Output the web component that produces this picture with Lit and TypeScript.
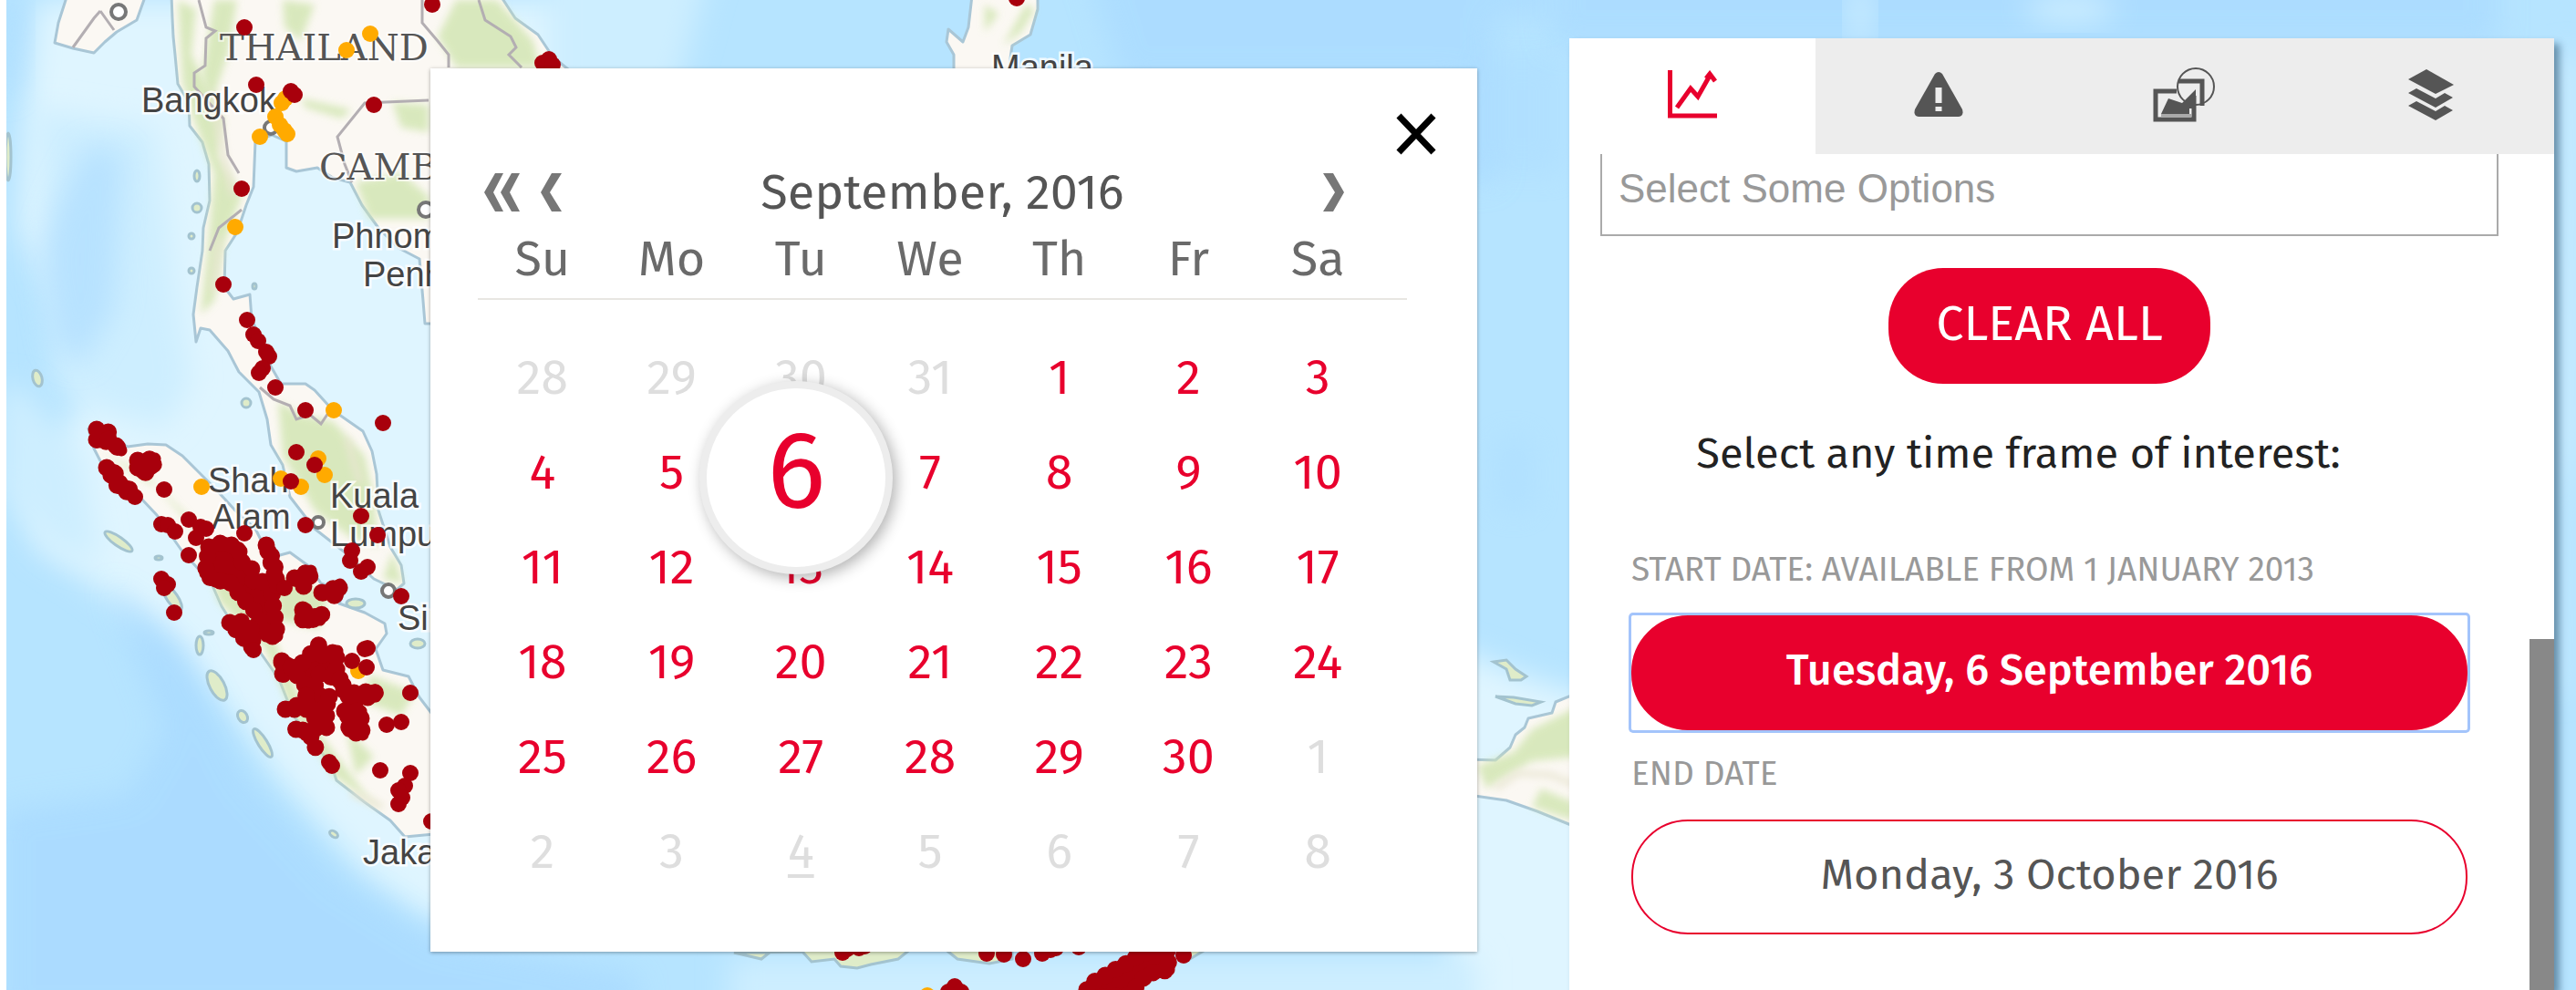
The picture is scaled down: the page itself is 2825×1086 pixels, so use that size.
import { LitElement, html, svg, css } from "lit";
import { customElement, property, state } from "lit/decorators.js";
import { classMap } from "lit/directives/class-map.js";

type Point = [number, number];

const points = (list: Point[]) => list.map((p) => p.join(",")).join(" ");

const FIRES: Point[] = [
  [268, 30], [281, 93], [319, 100], [323, 104], [410, 115], [265, 207], [245, 312], [271, 351],
  [278, 367], [283, 374], [292, 386], [295, 391], [288, 404], [284, 409], [302, 425], [335, 450],
  [420, 464], [325, 496], [345, 510], [319, 528], [474, 5], [180, 537], [148, 545], [177, 575],
  [184, 576], [192, 583], [207, 570], [220, 578], [215, 590], [226, 580], [207, 609], [268, 585],
  [177, 635], [184, 641], [180, 645], [191, 672], [335, 576], [396, 566], [414, 587], [386, 604],
  [384, 615], [396, 627], [403, 622], [440, 654], [473, 901], [361, 836], [364, 840], [417, 845],
  [450, 848], [444, 862], [437, 867], [441, 875], [437, 882], [450, 760], [424, 795], [440, 792],
  [403, 711], [400, 712], [386, 725], [402, 732], [278, 713], [312, 645], [595, 69], [602, 65],
  [606, 71], [1115, -2], [924, 1045], [929, 1041], [942, 1040], [948, 1038], [1082, 1046],
  [1101, 1047], [1122, 1052], [1143, 1046], [1152, 1042], [1158, 1040], [1183, 1039], [1298, 1048],
  [1040, 1088], [1047, 1082], [1054, 1088],
];

const ALERTS: Point[] = [
  [406, 37], [380, 55], [313, 108], [309, 113], [302, 128], [307, 137], [312, 143], [315, 147],
  [285, 150], [258, 249], [366, 450], [349, 503], [356, 521], [308, 525], [330, 534], [221, 534],
  [393, 736], [1017, 1092],
];

const CLUSTERS: Point[][] = [
  [[106, 471], [119, 474], [119, 484], [106, 485]],
  [[119, 482], [128, 490], [133, 494]],
  [[117, 513], [126, 516], [127, 528], [140, 534], [145, 542], [130, 535]],
  [[151, 505], [170, 503], [167, 514], [157, 520], [151, 515]],
  [[229, 600], [245, 595], [262, 601], [262, 614], [276, 624], [278, 640], [298, 636], [299, 660],
   [302, 680], [304, 698], [292, 698], [281, 672], [265, 655], [250, 636], [236, 638], [225, 629]],
  [[252, 683], [263, 681], [276, 690], [278, 712]],
  [[292, 598], [296, 606], [301, 618], [303, 635], [305, 645]],
  [[323, 634], [341, 626], [341, 630], [333, 643]],
  [[353, 650], [363, 647], [373, 641], [370, 654]],
  [[332, 669], [329, 678], [338, 683], [353, 673], [351, 680]],
  [[309, 725], [316, 727], [312, 742], [309, 738]],
  [[332, 727], [350, 707], [354, 720], [370, 714], [368, 730], [373, 748], [362, 742], [350, 740],
   [345, 754], [352, 765], [342, 762], [332, 748], [318, 732]],
  [[373, 745], [378, 760], [396, 760], [411, 757], [412, 764], [396, 766], [385, 770]],
  [[313, 778], [320, 775], [336, 772], [335, 760], [338, 775], [352, 785], [362, 762], [358, 775],
   [358, 798], [344, 800], [342, 806], [322, 799], [338, 802], [346, 820], [340, 806], [350, 792],
   [336, 778]],
  [[378, 780], [396, 780], [396, 797], [398, 806], [382, 802], [384, 790]],
  [[1184, 1096], [1198, 1078], [1235, 1057], [1252, 1046], [1280, 1040], [1282, 1064], [1258, 1068],
   [1238, 1092]],
];

const MAINLAND: Point[] = [
  [188, -6], [189, 20], [190, 40], [192, 60], [195, 92], [207, 112], [208, 138], [222, 156],
  [229, 180], [230, 220], [223, 250], [222, 275], [216, 315], [212, 345], [215, 375], [220, 360],
  [230, 362], [250, 385], [262, 408], [284, 430], [293, 460], [297, 488], [310, 510], [318, 545],
  [345, 580], [377, 605], [410, 635], [435, 647], [443, 640], [440, 620], [428, 600], [415, 560],
  [413, 520], [408, 495], [398, 473], [365, 450], [345, 428], [335, 421], [308, 421], [296, 400],
  [285, 370], [276, 350], [274, 323], [256, 328], [246, 315], [247, 275], [260, 255], [270, 225],
  [278, 205], [280, 155], [298, 148], [314, 155], [314, 184], [325, 188], [348, 184], [365, 195],
  [384, 200], [397, 225], [415, 250], [437, 272], [460, 284], [464, 330], [466, 355], [640, 355],
  [640, 90], [606, 62], [590, 38], [565, 20], [548, -6],
];

const SUMATRA: Point[] = [
  [97, 470], [108, 478], [140, 490], [162, 487], [182, 488], [200, 500], [215, 515], [235, 535],
  [258, 560], [280, 580], [296, 612], [318, 606], [340, 622], [352, 640], [378, 648], [372, 662],
  [400, 672], [422, 684], [424, 695], [412, 712], [420, 735], [448, 742], [460, 765], [476, 786],
  [476, 915], [444, 918], [428, 900], [400, 880], [369, 856], [364, 840], [345, 815], [322, 785],
  [306, 745], [285, 715], [262, 695], [243, 665], [232, 640], [200, 605], [172, 565], [155, 547],
  [120, 525], [103, 492],
];

const DELTA: Point[] = [
  [74, -6], [64, 25], [60, 47], [80, 53], [103, 58], [115, 46], [128, 35], [150, 22], [160, -6],
];

const PAPUA: Point[] = [
  [1610, 833], [1640, 834], [1656, 820], [1662, 806], [1672, 798], [1676, 788], [1702, 782],
  [1706, 770], [1740, 756], [1740, 912], [1686, 890], [1652, 878], [1610, 872],
];

const LABELS: { x: number; y: number; text: string }[] = [
  { x: 155, y: 123, text: "Bangkok" },
  { x: 364, y: 272, text: "Phnom" },
  { x: 398, y: 314, text: "Penh" },
  { x: 228, y: 540, text: "Shah" },
  { x: 232, y: 580, text: "Alam" },
  { x: 362, y: 557, text: "Kuala" },
  { x: 362, y: 599, text: "Lumpur" },
  { x: 436, y: 691, text: "Singapore" },
  { x: 398, y: 948, text: "Jakarta" },
  { x: 1087, y: 87, text: "Manila" },
];

@customElement("fire-map")
class FireMap extends LitElement {
  static styles = css`
    :host {
      display: block;
      overflow: hidden;
      background: #b6e4ff;
    }
    .canvas {
      display: block;
      width: 100%;
      height: 100%;
    }
    .land { fill: #fbf8f3; stroke: #a9c6d6; stroke-width: 3; stroke-linejoin: round; }
    .isle { fill: #dfecc9; stroke: #a3c3cf; stroke-width: 3; }
    .forest { fill: #d3e6b4; filter: url(#haze); opacity: 0.85; }
    .ridge { fill: none; stroke: #e9e6d3; stroke-width: 6; filter: url(#haze); }
    .shelf { fill: #dff5ff; filter: url(#fog); }
    .deep { fill: #a9daff; filter: url(#fog); }
    .pale { fill: #cdeeff; filter: url(#fog); }
    .border { fill: none; stroke: #b3aeb2; stroke-width: 3; }
    .fires { fill: #a8000c; }
    .cluster { fill: #a8000c; stroke: #a8000c; stroke-width: 13; stroke-linejoin: round; }
    .bumps { fill: none; stroke: #a8000c; stroke-width: 19; stroke-linecap: round; stroke-dasharray: 0 13; }
    .alerts { fill: #ffaa00; }
    .town { fill: #fff; stroke: #777; stroke-width: 4; }
    .city {
      font: 38px "Liberation Sans", Arial, sans-serif;
      fill: #444;
      stroke: #fff;
      stroke-width: 5;
      stroke-opacity: 0.8;
      paint-order: stroke;
    }
    .country {
      font: 40px "DejaVu Serif", serif;
      fill: #555;
      stroke: #fff;
      stroke-width: 4;
      stroke-opacity: 0.6;
      paint-order: stroke;
    }
  `;

  render() {
    return html`
      <svg class="canvas" viewBox="7 0 2818 1086" preserveAspectRatio="xMinYMin slice" role="img" aria-label="Map of fires in South East Asia">
        <defs>
          <filter id="fog" x="-30%" y="-30%" width="160%" height="160%"><feGaussianBlur stdDeviation="16" /></filter>
          <filter id="haze" x="-30%" y="-30%" width="160%" height="160%"><feGaussianBlur stdDeviation="4" /></filter>
        </defs>
        <path class="shelf" d="M40 0H640V1000L470 1010L400 960L310 860L250 780L180 700L100 640L40 600L20 540L90 440L60 330L20 250L30 100Z" />
        <path class="pale" d="M40 120L170 140L190 300L210 420L180 470L110 450L60 420L50 250Z" />
        <path class="deep" d="M95 160L135 165L125 340L90 400L60 380L45 280L60 230Z" opacity="0.6" />
        <path class="deep" d="M0 0H30L20 90L0 110Z" opacity="0.6" />
        <path class="deep" d="M120 640L200 710L270 850L370 960L480 1030L700 1070V1120H0V890L140 870L180 800Z" opacity="0.8" />
        <path class="pale" d="M30 430L90 500L110 620L60 600L0 540V420Z" />
        <path class="deep" d="M1190 -40H1700V20H1640V200H1600V90H1230Z" opacity="0.7" />
        <path class="pale" d="M600 -40H780L740 110H600Z" />
        <path class="deep" d="M1700 -60H2740V50H1700Z" opacity="0.7" />
        <ellipse class="pale" cx="2040" cy="15" rx="12" ry="40" />
        <ellipse class="pale" cx="2270" cy="10" rx="50" ry="16" />
        <path class="deep" d="M1625 60H1715V190H1625ZM1640 480H1680V560H1640Z" opacity="0.4" />
        <path class="pale" d="M2805 60H2825V480L2810 560V760H2800Z" />
        <path class="shelf" d="M1590 710L1680 745L1760 770V1140H1590V900Z" />
        <path class="pale" d="M800 1050H1620V1140H800Z" />

        <polygon class="land" points=${points(DELTA)} />
        <polygon class="land" points=${points(MAINLAND)} />
        <polygon class="land" points=${points(SUMATRA)} />
        <polygon class="land" points=${points(PAPUA)} />
        <path class="land" d="M1066 -5L1062 30L1056 46L1040 32L1038 46L1046 60V85H1105L1110 50L1130 38L1138 10V-5Z" />
        <path class="isle" d="M805 1045L835 1052L850 1040H1000L985 1052L955 1058L940 1062L922 1060L915 1052L890 1055L880 1044ZM1035 1040L1050 1052L1085 1057L1110 1052V1040ZM1300 1055L1325 1040H1295Z" />

        <path class="forest" d="M195 0L215 10L210 60L225 90L245 130L240 170L265 215L245 270L235 330L220 345L228 270L235 190L212 130L200 90Z" />
        <path class="forest" d="M235 0H260L250 60L230 120L222 80ZM310 0L345 5L330 45L312 30ZM430 112L470 115V145L440 140ZM330 108L385 120L375 130L335 118Z" />
        <path class="forest" d="M390 200L440 190L470 215V240H405ZM500 0H545L585 45L592 74H500L480 40Z" />
        <path class="forest" d="M305 440L330 455L365 462L400 500L410 545L415 600L385 590L345 560L310 500Z" />
        <path class="forest" d="M110 495L180 540L215 575L240 660L290 710L320 780L365 850L420 890L400 870L340 790L300 700L230 600L160 520Z" />
        <path class="forest" d="M300 630L360 650L350 690L305 680ZM405 740L455 760L440 785L400 770ZM430 605L442 640L420 635ZM380 800L410 830L390 850Z" />
        <path class="forest" d="M1620 840L1660 825L1680 800L1730 775V830L1680 835L1630 865Z" />
        <path class="forest" d="M1690 865L1725 880V900L1680 885ZM1125 5L1135 10L1120 35L1100 50ZM1080 5L1095 15L1080 35Z" />
        <path class="ridge" d="M232 100L245 170L256 215M240 260L234 320M1640 865L1665 848L1700 850L1730 862M380 480L395 530M385 870L420 885" />

        <g>
          <path class="border" d="M218 0L226 30L236 34L226 42L225 72L213 80V95L245 130L250 170L262 190M470 110L400 113L370 150L378 180L386 200" />
          <path class="border" d="M463 0V25L480 45L492 60V74M525 0L532 22L560 40L566 52L558 60L572 74M110 12L103 20L80 52M110 12L125 33M285 425L300 438L318 445L325 460L340 455L352 465L362 450M265 230L240 250L230 275" />
        </g>
        <g>
          <ellipse class="isle" cx="130" cy="594" rx="18" ry="5" transform="rotate(35 130 594)" />
          <ellipse class="isle" cx="238" cy="752" rx="8" ry="18" transform="rotate(-28 238 752)" />
          <ellipse class="isle" cx="266" cy="786" rx="5" ry="7" transform="rotate(-30 266 786)" />
          <ellipse class="isle" cx="288" cy="815" rx="5" ry="18" transform="rotate(-32 288 815)" />
          <ellipse class="isle" cx="189" cy="656" rx="6" ry="16" transform="rotate(-35 189 656)" />
          <ellipse class="isle" cx="219" cy="708" rx="4" ry="10" />
          <ellipse class="isle" cx="229" cy="694" rx="5" ry="2" />
          <ellipse class="isle" cx="174" cy="612" rx="4" ry="2" />
          <ellipse class="isle" cx="41" cy="415" rx="5" ry="9" transform="rotate(-15 41 415)" />
          <ellipse class="isle" cx="366" cy="915" rx="5" ry="3" transform="rotate(35 366 915)" />
          <ellipse class="isle" cx="216" cy="193" rx="3" ry="6" />
          <ellipse class="isle" cx="216" cy="228" rx="5" ry="5" />
          <ellipse class="isle" cx="210" cy="259" rx="3" ry="3" />
          <ellipse class="isle" cx="210" cy="297" rx="3" ry="3" />
          <ellipse class="isle" cx="270" cy="442" rx="5" ry="5" />
          <ellipse class="isle" cx="279" cy="314" rx="2" ry="3" />
          <ellipse class="isle" cx="390" cy="662" rx="10" ry="5" />
          <ellipse class="isle" cx="458" cy="706" rx="8" ry="5" />
          <ellipse class="isle" cx="9" cy="172" rx="3" ry="26" />
          <path class="isle" d="M1638 726L1652 724L1662 734L1674 742L1668 746H1656L1652 734Z" />
          <path class="isle" d="M1640 764L1660 765L1690 770L1680 774L1662 772Z" />
        </g>
        <circle class="town" cx="130" cy="13" r="8" />
        <circle class="town" cx="297" cy="140" r="7" />
        <circle class="town" cx="426" cy="648" r="7" />
        <circle class="town" cx="349" cy="573" r="6" />
        <circle class="town" cx="467" cy="230" r="8" />

        <text class="country" x="241" y="66">THAILAND</text>
        <text class="country" x="350" y="197">CAMBODIA</text>
        ${LABELS.map((l) => svg`<text class="city" x=${l.x} y=${l.y}>${l.text}</text>`)}

        <g class="alerts">${ALERTS.map(([x, y]) => svg`<circle cx=${x} cy=${y} r="9" />`)}</g>
        ${CLUSTERS.map(
          (c) => svg`<polygon class="cluster" points=${points(c)} /><polygon class="bumps" points=${points(c)} />`
        )}
        <g class="fires">${FIRES.map(([x, y]) => svg`<circle cx=${x} cy=${y} r="9" />`)}</g>
      </svg>
    `;
  }
}

interface Day {
  day: number;
  inMonth: boolean;
}

const WEEKDAYS = ["Su", "Mo", "Tu", "We", "Th", "Fr", "Sa"];

@customElement("date-picker")
class DatePicker extends LitElement {
  @property({ type: Number }) selected = 6;

  static styles = css`
    :host {
      display: block;
      position: relative;
      box-sizing: border-box;
      padding: 101px 77px 58px 52px;
      background: #fff;
      box-shadow: 0 1px 4px rgba(0, 0, 0, 0.35);
      color: #6a6a6a;
      font: 54px/70px "Fira Sans", "Noto Sans", sans-serif;
    }
    button {
      margin: 0;
      padding: 0;
      border: 0;
      background: none;
      color: inherit;
      font: inherit;
      cursor: pointer;
    }
    svg { display: block; }
    .close {
      position: absolute;
      top: 49px;
      right: 45px;
    }
    .nav {
      display: grid;
      grid-template-columns: 1fr auto 1fr;
      align-items: center;
      color: #777;
    }
    .back {
      display: flex;
      gap: 22px;
      padding-left: 7px;
    }
    .forward {
      justify-self: end;
      margin-right: 69px;
    }
    .title {
      margin: 0;
      color: #555;
      font: inherit;
    }
    .days {
      width: calc(100% - 27px);
      border-spacing: 0;
      table-layout: fixed;
      text-align: center;
    }
    .week {
      position: relative;
    }
    .week::after {
      content: "";
      position: absolute;
      left: 0;
      right: -27px;
      bottom: 0;
      height: 2px;
      background: #e8e6e2;
    }
    th {
      height: 83px;
      padding: 0 0 8px;
      box-sizing: border-box;
      font-weight: 400;
    }
    .body::before {
      content: "";
      display: block;
      height: 33px;
    }
    td {
      position: relative;
      height: 104px;
      padding: 0;
      color: #e8002d;
    }
    .outside { color: #dedede; }
    .today { text-decoration: underline; text-underline-offset: 7px; text-decoration-thickness: 4px; }
    .chosen {
      position: absolute;
      z-index: 1;
      top: -48px;
      left: 50%;
      box-sizing: border-box;
      width: 212px;
      height: 212px;
      margin-left: -111px;
      padding-bottom: 14px;
      border: 8px solid #ededed;
      border-radius: 50%;
      background: #fff;
      box-shadow: 4px 4px 16px rgba(0, 0, 0, 0.3);
      font-size: 120px;
      line-height: 180px;
    }
  `;

  private get weeks(): Day[][] {
    const days: Day[] = [];
    for (let i = 28; i <= 31; i++) days.push({ day: i, inMonth: false });
    for (let i = 1; i <= 30; i++) days.push({ day: i, inMonth: true });
    for (let i = 1; i <= 8; i++) days.push({ day: i, inMonth: false });
    return Array.from({ length: 6 }, (_, w) => days.slice(w * 7, w * 7 + 7));
  }

  private cell(d: Day, week: number) {
    const classes = {
      chosen: d.inMonth && d.day === this.selected,
      outside: !d.inMonth,
      today: week === 5 && d.day === 4,
    };
    return html`<td>
      <button class=${classMap(classes)} @click=${() => d.inMonth && (this.selected = d.day)}>${d.day}</button>
    </td>`;
  }

  render() {
    return html`
      <button class="close" aria-label="Close">
        <svg width="44" height="46" viewBox="0 0 44 46" fill="none" stroke="#000" stroke-width="7">
          <path d="M3 3L41 43M41 3L3 43" />
        </svg>
      </button>
      <div class="nav">
        <div class="back">
          <button aria-label="Previous year">
            <svg width="40" height="42" viewBox="0 0 40 42" fill="currentColor">
              <path d="M12 0H21L10 21L21 42H12L0 21ZM30 0H39L28 21L39 42H30L18 21Z" />
            </svg>
          </button>
          <button aria-label="Previous month">
            <svg width="24" height="42" viewBox="0 0 24 42" fill="currentColor">
              <path d="M12 0H23L10 21L23 42H12L0 21Z" />
            </svg>
          </button>
        </div>
        <h2 class="title">September, 2016</h2>
        <button class="forward" aria-label="Next month">
          <svg width="24" height="42" viewBox="0 0 24 42" fill="currentColor">
            <path d="M12 0H1L14 21L1 42H12L24 21Z" />
          </svg>
        </button>
      </div>
      <table class="days">
        <thead class="week">
          <tr>${WEEKDAYS.map((d) => html`<th scope="col">${d}</th>`)}</tr>
        </thead>
        <tbody class="body">
          ${this.weeks.map((w, i) => html`<tr>${w.map((d) => this.cell(d, i))}</tr>`)}
        </tbody>
      </table>
    `;
  }
}

@customElement("analysis-panel")
class AnalysisPanel extends LitElement {
  @state() private active = 0;

  static styles = css`
    :host {
      display: flex;
      flex-direction: column;
      background: #fff;
      box-shadow: 6px 6px 8px rgba(0, 40, 70, 0.45);
      font: 47px/60px "Fira Sans", "Noto Sans", sans-serif;
      color: #222;
    }
    button {
      box-sizing: border-box;
      margin: 0;
      padding: 0;
      border: 0;
      font: inherit;
      cursor: pointer;
    }
    .tabs {
      display: grid;
      grid-template-columns: repeat(4, 1fr);
    }
    .tab {
      display: flex;
      align-items: center;
      justify-content: center;
      height: 127px;
      padding-bottom: 4px;
      background: #ededed;
      color: #555;
    }
    .tab.active {
      background: #fff;
      color: #e8002d;
    }
    .pane {
      flex: 1;
      display: grid;
      grid-template-columns: 1fr 27px;
    }
    .content {
      display: flex;
      flex-direction: column;
      padding: 0 34px;
    }
    .options {
      box-sizing: border-box;
      width: 100%;
      height: 90px;
      padding: 0 18px 12px;
      border: 2px solid #aaa;
      border-top: 0;
      background: #fff;
      font: 44px/50px "Liberation Sans", Arial, sans-serif;
    }
    .options::placeholder { color: #999; opacity: 1; }
    .clear {
      align-self: center;
      height: 127px;
      margin-top: 35px;
      padding: 0 52px 6px;
      border-radius: 60px;
      background: #e8002d;
      color: #fff;
      font-size: 54px;
    }
    .prompt {
      margin: 46px 68px 0 0;
      text-align: center;
    }
    .field {
      display: flex;
      flex-direction: column;
      padding: 0 34px;
    }
    .start { margin-top: 74px; }
    .end { margin-top: 24px; }
    .label {
      margin-bottom: 26px;
      color: #999;
      font-size: 37px;
      line-height: 48px;
      text-transform: uppercase;
    }
    .date {
      height: 126px;
      padding-bottom: 6px;
      border: 2px solid #e8002d;
      border-radius: 62px;
      background: #fff;
      color: #555;
    }
    .picked {
      background: #e8002d;
      color: #fff;
      font-weight: 500;
    }
    .ring {
      display: grid;
      box-shadow: 0 0 0 3px #a3c4fb;
      border-radius: 2px;
    }
    .track { display: flex; }
    .thumb {
      flex: 1;
      margin-top: 532px;
      background: #888;
    }
  `;

  private icons = [
    {
      name: "Analysis",
      art: svg`<svg width="54" height="54" viewBox="0 0 54 54" fill="none" stroke="currentColor" stroke-width="5">
        <path d="M2.500 0V50H54" />
        <path d="M10 41L25 20L33 29L46 6" /><path d="M42 9L46 4L52 12" />
      </svg>`,
    },
    {
      name: "Fires",
      art: svg`<svg width="54" height="50" viewBox="0 0 54 50">
        <path fill="currentColor" d="M23 2Q27 -2 31 2L53 41Q55 48 49 49H5Q-1 48 1 41Z" />
        <path fill="#ededed" d="M23.500 17H30.500V34H23.500ZM23.500 38H30.500V43H23.500Z" />
      </svg>`,
    },
    {
      name: "Imagery",
      art: svg`<svg width="70" height="62" viewBox="0 0 70 62">
        <path fill="none" stroke="currentColor" stroke-width="5" d="M28 16H54V43M26 27H3V58H45V32" />
        <circle fill="none" stroke="currentColor" stroke-width="2" cx="47" cy="22" r="20" />
        <path fill="currentColor" d="M9 52L17 35L32 40L47 25V46H40V52Z" />
        <path fill="#aaa" d="M9 52H42V56H9Z" />
      </svg>`,
    },
    {
      name: "Layers",
      art: svg`<svg width="50" height="56" viewBox="0 0 50 56" fill="currentColor">
        <path d="M20 0L50 17L30 27L0 11Z" />
        <path d="M9 21L30 32L40 26L49 31L30 42L0 26Z" />
        <path d="M9 35L30 46L40 40L49 45L30 56L0 40Z" />
      </svg>`,
    },
  ];

  render() {
    return html`
      <div class="tabs" role="tablist">
        ${this.icons.map(
          (icon, i) => html`<button
            role="tab"
            class=${classMap({ tab: true, active: i === this.active })}
            aria-label=${icon.name}
            aria-selected=${i === this.active}
            @click=${() => (this.active = i)}
          >${icon.art}</button>`
        )}
      </div>
      <div class="pane">
        <div class="content">
          <input class="options" type="text" placeholder="Select Some Options" aria-label="Regions" />
          <button class="clear">CLEAR ALL</button>
          <p class="prompt">Select any time frame of interest:</p>
          <div class="field start">
            <label class="label" for="start">Start date: available from 1 January 2013</label>
            <div class="ring"><button class="date picked" id="start">Tuesday, 6 September 2016</button></div>
          </div>
          <div class="field end">
            <label class="label" for="end">End date</label>
            <button class="date" id="end">Monday, 3 October 2016</button>
          </div>
        </div>
        <div class="track"><div class="thumb"></div></div>
      </div>
    `;
  }
}

@customElement("app-root")
class AppRoot extends LitElement {
  static styles = css`
    :host { display: block; }
    .page {
      position: relative;
      display: grid;
      grid-template-columns: 465fr 1148fr 101fr 1080fr 24fr;
      min-height: 100vh;
      padding-left: 7px;
      box-sizing: border-box;
      background: #fff;
      overflow: hidden;
    }
    .map {
      position: absolute;
      inset: 0 0 0 7px;
    }
    .dialog {
      grid-column: 2;
      align-self: start;
      margin-top: 75px;
    }
    .panel {
      grid-column: 4;
      position: relative;
      margin-top: 42px;
    }
  `;

  render() {
    return html`
      <main class="page">
        <fire-map class="map"></fire-map>
        <date-picker class="dialog" role="dialog" aria-label="Choose a date"></date-picker>
        <analysis-panel class="panel"></analysis-panel>
      </main>
    `;
  }
}
